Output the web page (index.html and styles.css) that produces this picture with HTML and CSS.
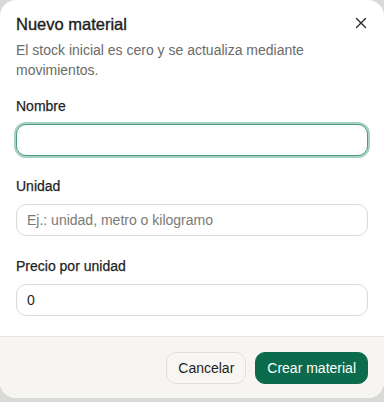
FILE: index.html
```html
<!DOCTYPE html>
<html lang="es">
<head>
    <meta charset="UTF-8">
    <meta name="viewport" content="width=device-width, initial-scale=1.0">
    <title>Nuevo material</title>
    <link rel="stylesheet" href="styles.css">
</head>
<body>
    <div class="dialog">
        <div class="dialog-header">
            <h2 class="dialog-title">Nuevo material</h2>
            <p class="dialog-desc">El stock inicial es cero y se actualiza mediante movimientos.</p>
            <button class="close-btn" aria-label="Cerrar">
                <svg width="12" height="12" viewBox="0 0 12 12">
                    <path d="M1.5 1.5 L10.5 10.5 M10.5 1.5 L1.5 10.5" stroke="#2b2b2b" stroke-width="1.4" stroke-linecap="round" fill="none"/>
                </svg>
            </button>
        </div>
        <div class="dialog-body">
            <div class="field">
                <label class="field-label">Nombre</label>
                <input class="field-input focused" type="text">
            </div>
            <div class="field">
                <label class="field-label">Unidad</label>
                <input class="field-input" type="text" placeholder="Ej.: unidad, metro o kilogramo">
            </div>
            <div class="field">
                <label class="field-label">Precio por unidad</label>
                <input class="field-input" type="text" value="0">
            </div>
        </div>
        <div class="dialog-footer">
            <button class="btn btn-secondary">Cancelar</button>
            <button class="btn btn-primary">Crear material</button>
        </div>
    </div>
</body>
</html>
```

FILE: styles.css
```css
body, html {
    margin: 0;
    height: 100%;
    overflow: hidden;
    background-color: #d9d9d7;
    font-family: "Liberation Sans", Arial, sans-serif;
    color: #1f1f1f;
}
.dialog {
    position: relative;
    height: 398px;
    background-color: #fff;
    border-radius: 16px;
    overflow: hidden;
    display: flex;
    flex-direction: column;
}
.dialog-header {
    padding: 12px 16px 0;
}
.dialog-title {
    margin: 0;
    font-size: 16.5px;
    line-height: 24px;
    font-weight: 400;
    -webkit-text-stroke: 0.35px #1c1c1c;
    color: #1c1c1c;
}
.dialog-desc {
    margin: 4px 0 0;
    font-size: 14px;
    line-height: 20px;
    color: #6b6b68;
}
.close-btn {
    position: absolute;
    top: 16px;
    right: 16px;
    width: 14px;
    height: 14px;
    padding: 0;
    border: none;
    background: none;
    display: flex;
    align-items: center;
    justify-content: center;
}
.dialog-body {
    padding: 16px 16px 0;
    display: flex;
    flex-direction: column;
    gap: 20px;
}
.field {
    display: flex;
    flex-direction: column;
    gap: 8px;
}
.field-label {
    font-size: 14px;
    line-height: 20px;
    -webkit-text-stroke: 0.25px #1f1f1f;
    color: #1f1f1f;
}
.field-input {
    box-sizing: border-box;
    height: 32px;
    width: 100%;
    padding: 0 10px;
    border: 1px solid #dcdad5;
    border-radius: 10px;
    font-family: inherit;
    font-size: 14px;
    color: #1f1f1f;
    background-color: #fff;
    outline: none;
}
.field-input::placeholder {
    color: #7a7a77;
}
.field-input.focused {
    border-color: #4d9c7e;
    box-shadow: 0 0 0 2px rgba(110, 180, 152, 0.6);
}
.dialog-footer {
    box-sizing: border-box;
    margin-top: auto;
    height: 62px;
    background-color: #f6f5f1;
    border-top: 1px solid #e8e6e1;
    display: flex;
    justify-content: flex-end;
    align-items: flex-start;
    gap: 9px;
    padding: 15px 16px 0;
}
.btn {
    height: 32px;
    padding: 0 11px;
    border-radius: 10px;
    font-family: inherit;
    font-size: 14px;
    cursor: pointer;
}
.btn-secondary {
    background-color: #f7f6f2;
    border: 1px solid #e0ded8;
    color: #1f1f1f;
}
.btn-primary {
    background-color: #0c6b4c;
    border: 1px solid #0c6b4c;
    color: #fff;
}
```
